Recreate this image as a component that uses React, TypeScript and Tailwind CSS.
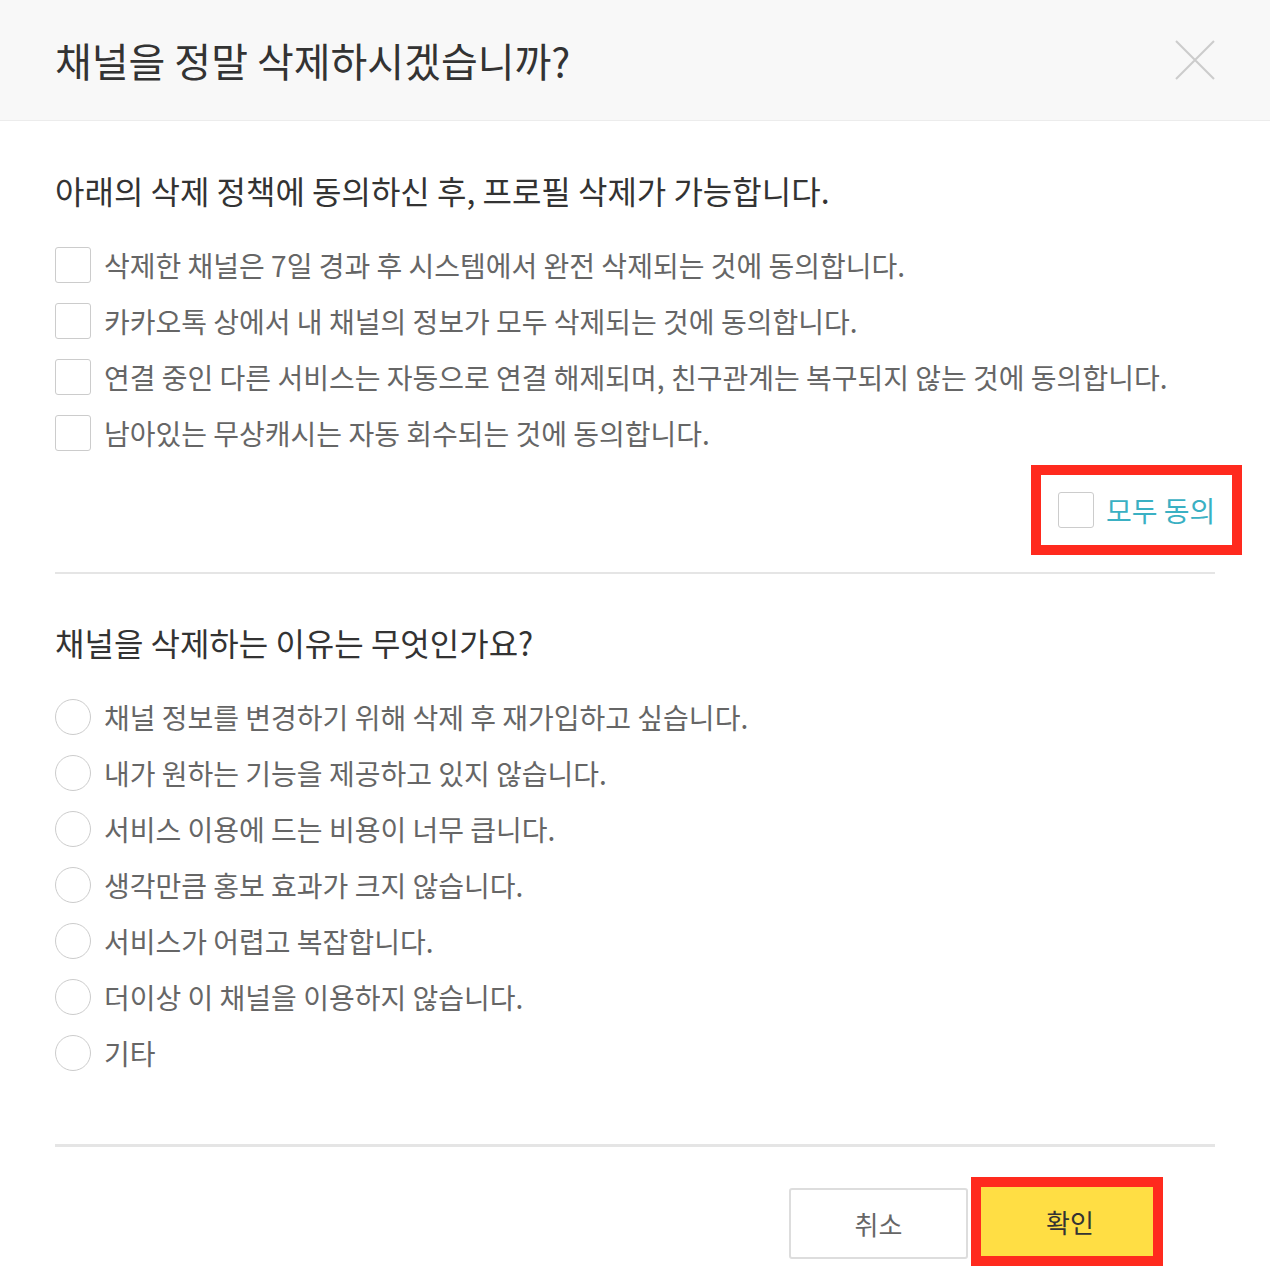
import { useState } from "react";

const policies = [
  "삭제한 채널은 7일 경과 후 시스템에서 완전 삭제되는 것에 동의합니다.",
  "카카오톡 상에서 내 채널의 정보가 모두 삭제되는 것에 동의합니다.",
  "연결 중인 다른 서비스는 자동으로 연결 해제되며, 친구관계는 복구되지 않는 것에 동의합니다.",
  "남아있는 무상캐시는 자동 회수되는 것에 동의합니다.",
];

const reasons = [
  "채널 정보를 변경하기 위해 삭제 후 재가입하고 싶습니다.",
  "내가 원하는 기능을 제공하고 있지 않습니다.",
  "서비스 이용에 드는 비용이 너무 큽니다.",
  "생각만큼 홍보 효과가 크지 않습니다.",
  "서비스가 어렵고 복잡합니다.",
  "더이상 이 채널을 이용하지 않습니다.",
  "기타",
];

function CheckBox({ checked }: { checked: boolean }) {
  return (
    <span
      className={`flex h-[36px] w-[36px] shrink-0 items-center justify-center rounded-[3px] border ${
        checked ? "border-[#3ab0c3] bg-[#3ab0c3]" : "border-[#cccccc] bg-white"
      }`}
    >
      {checked && (
        <svg width="20" height="20" viewBox="0 0 20 20" fill="none">
          <path d="M4 10l4 4 8-8" stroke="white" strokeWidth="2.5" />
        </svg>
      )}
    </span>
  );
}

export default function App() {
  const [agreed, setAgreed] = useState<boolean[]>([false, false, false, false]);
  const [reason, setReason] = useState<number | null>(null);
  const allAgreed = agreed.every(Boolean);

  return (
    <div
      className="min-h-screen w-[1270px] bg-white text-[#333333]"
      style={{ fontFamily: '"Noto Sans CJK KR", "Noto Sans", sans-serif' }}
    >
      <div className="flex h-[121px] items-center justify-between border-b border-[#ececec] bg-[#f8f8f8] pl-[55px] pr-[55px]">
        <h1 className="text-[40px] font-normal leading-[44px] text-[#333333]">
          채널을 정말 삭제하시겠습니까?
        </h1>
        <button className="flex h-[40px] w-[40px] items-center justify-center">
          <svg width="40" height="40" viewBox="0 0 40 40" fill="none">
            <path d="M1 1L39 39M39 1L1 39" stroke="#cccccc" strokeWidth="2" />
          </svg>
        </button>
      </div>

      <div className="px-[55px]">
        <h2 className="mt-[49px] text-[32px] font-normal leading-[40px]">
          아래의 삭제 정책에 동의하신 후, 프로필 삭제가 가능합니다.
        </h2>
        <ul className="mt-[27px]">
          {policies.map((p, i) => (
            <li
              key={p}
              className="flex h-[56px] cursor-pointer items-center gap-[13px]"
              onClick={() => setAgreed(agreed.map((v, j) => (j === i ? !v : v)))}
            >
              <CheckBox checked={agreed[i]} />
              <span className="text-[28px] leading-[36px] text-[#666666]">{p}</span>
            </li>
          ))}
        </ul>

        <div className="mt-[4px] flex justify-end">
          <div
            className="mr-[-27px] flex h-[90px] w-[211px] cursor-pointer items-center gap-[12px] border-[10px] border-[#ff2a1e] pl-[17px]"
            onClick={() => setAgreed(agreed.map(() => !allAgreed))}
          >
            <CheckBox checked={allAgreed} />
            <span className="whitespace-nowrap text-[28px] leading-[36px] text-[#3ab0c3]">모두 동의</span>
          </div>
        </div>

        <div className="mt-[17px] h-[2px] bg-[#e5e5e5]" />

        <h2 className="mt-[48px] text-[32px] font-normal leading-[40px]">
          채널을 삭제하는 이유는 무엇인가요?
        </h2>
        <ul className="mt-[27px]">
          {reasons.map((r, i) => (
            <li
              key={r}
              className="flex h-[56px] cursor-pointer items-center gap-[13px]"
              onClick={() => setReason(i)}
            >
              <span className="flex h-[36px] w-[36px] shrink-0 items-center justify-center rounded-full border border-[#cccccc] bg-white">
                {reason === i && <span className="h-[16px] w-[16px] rounded-full bg-[#3ab0c3]" />}
              </span>
              <span className="text-[28px] leading-[36px] text-[#666666]">{r}</span>
            </li>
          ))}
        </ul>

        <div className="mt-[63px] h-[3px] bg-[#e5e5e5]" />

        <div className="mt-[30px] flex items-center justify-end gap-[3px] pr-[52px]">
          <button className="mt-[4px] h-[71px] w-[179px] rounded-[3px] border-2 border-[#dddddd] bg-white text-[26px] text-[#666666]">
            취소
          </button>
          <button className="h-[89px] w-[192px] border-[10px] border-[#ff2a1e] bg-[#ffde44] pl-[6px] text-[26px] text-[#333333]">
            확인
          </button>
        </div>
      </div>
    </div>
  );
}
